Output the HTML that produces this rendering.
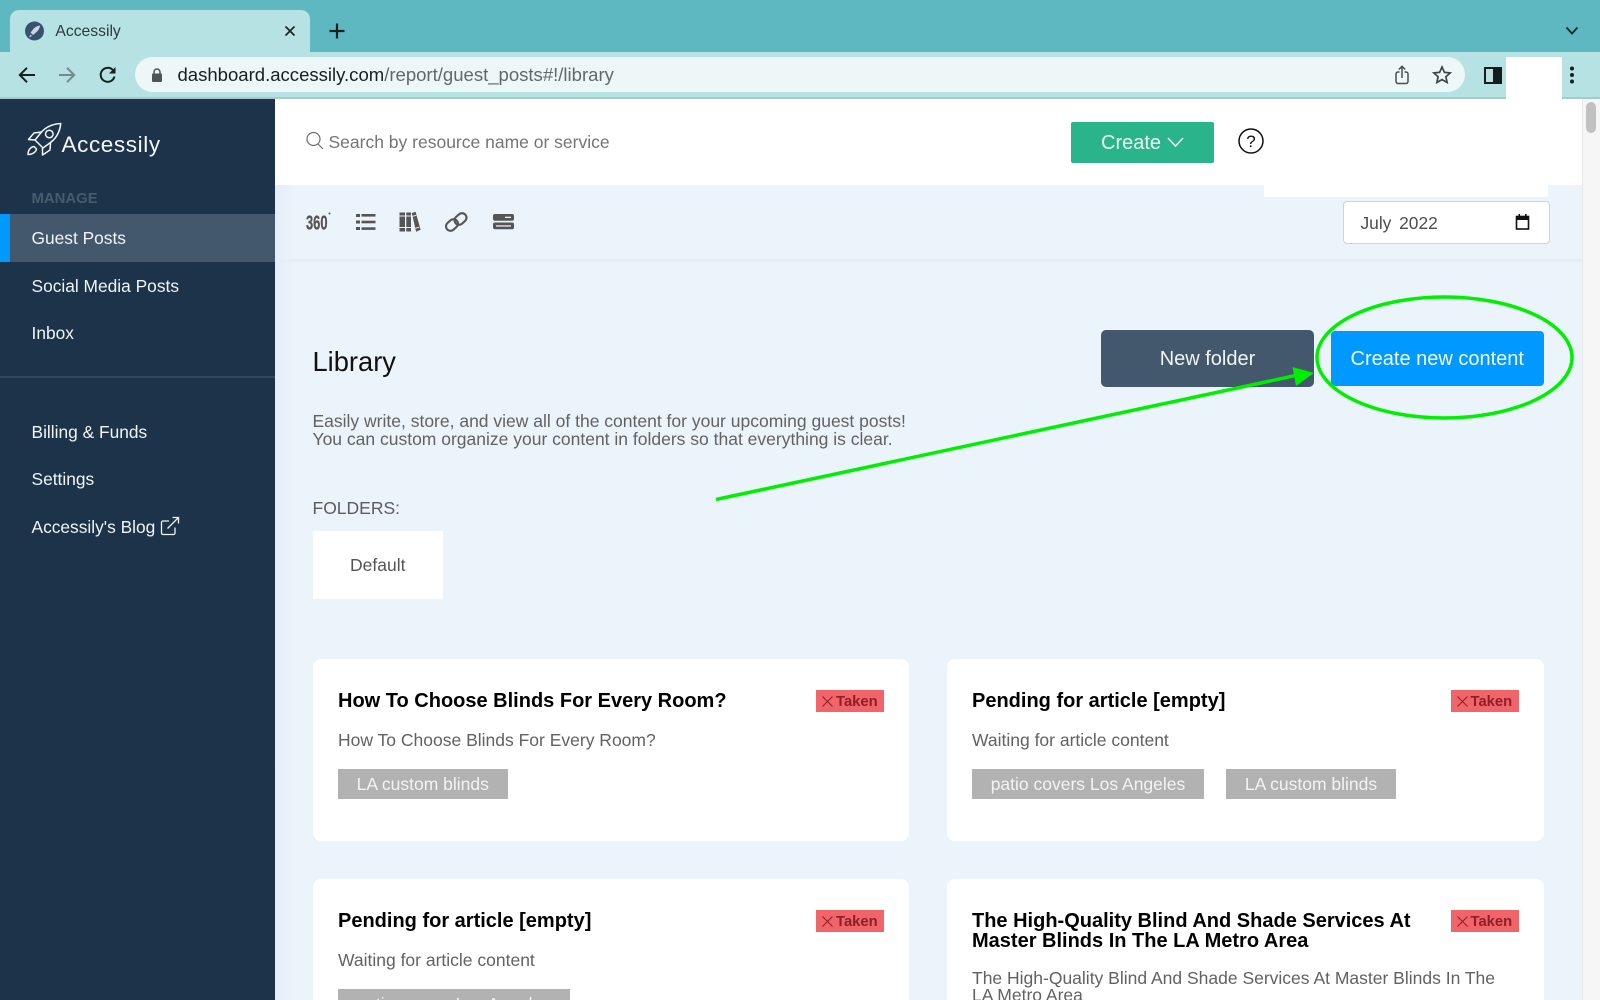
<!DOCTYPE html>
<html>
<head>
<meta charset="utf-8">
<title>Accessily</title>
<style>
html,body{margin:0;padding:0;width:1600px;height:1000px;overflow:hidden;background:#ebf3fb;font-family:"Liberation Sans",Arial,sans-serif}
#w{position:relative;width:1600px;height:1000px;overflow:hidden;background:#ebf3fb}
.a{position:absolute}
.t{position:absolute;white-space:nowrap;line-height:20px;height:20px}
.side{color:#f1f4f7;font-size:17.35px;left:31.5px}
.card{position:absolute;background:#fff;border-radius:8px}
.ttl{position:absolute;font-weight:bold;font-size:20px;line-height:20px;color:#000;white-space:nowrap}
.desc{position:absolute;font-size:17.5px;line-height:17.5px;color:#626262;white-space:nowrap}
.tag{position:absolute;background:#b2b2b2;color:#f3f3f3;font-size:17.5px;line-height:30px;height:30px;text-align:center;white-space:nowrap}
.bad{position:absolute;background:#f0646a;height:22px;width:68px;color:#8d2027;font-weight:bold;font-size:14.8px;line-height:24.5px}
.bad span{position:absolute;left:20px;top:0}
.bad svg{position:absolute;left:6px;top:5.5px}
</style>
</head>
<body>
<div id="w">
<!-- browser chrome -->
<div class="a" style="left:0;top:0;width:1600px;height:53px;background:#5db8c1"></div>
<div class="a" style="left:0;top:52px;width:1600px;height:46px;background:#b7e2e3"></div>
<div class="a" style="left:0;top:97px;width:1600px;height:2px;background:#a6cbce"></div>
<div class="a" style="left:10px;top:10px;width:300px;height:43px;background:#b7e2e3;border-radius:9px 9px 0 0"></div>
<svg class="a" style="left:24px;top:21px" width="22" height="22" viewBox="0 0 22 22"><circle cx="10.500" cy="10" r="9.500" fill="#35536f"/><path d="M16 4.500c-3.500 .5-5.500 2-7 4l-2.500 3 2.500 2.500 3-2.500c2-1.500 3.500-3.500 4-7zM6.500 13.500l-1.500 3 3-1.500z" fill="#c9d6df"/></svg>
<div class="t" style="left:55.400px;top:21.500px;font-size:15.700px;color:#2c3a3c">Accessily</div>
<svg class="a" style="left:284px;top:25px" width="12" height="12" viewBox="0 0 12 12"><path d="M1.500 1.500l9 9M10.500 1.500l-9 9" stroke="#1b2526" stroke-width="1.700" fill="none"/></svg>
<svg class="a" style="left:328px;top:22px" width="18" height="18" viewBox="0 0 18 18"><path d="M9 1.500v15M1.500 9h15" stroke="#152022" stroke-width="2.200" fill="none"/></svg>
<svg class="a" style="left:1564px;top:26px" width="16" height="10" viewBox="0 0 16 10"><path d="M2.500 1.500L8 7.500l5.500-6" stroke="#16282b" stroke-width="1.800" fill="none"/></svg>
<svg class="a" style="left:17px;top:65px" width="20" height="20" viewBox="0 0 20 20"><path d="M18 10H3M10 2.800L2.800 10l7.200 7.200" stroke="#15201f" stroke-width="2" fill="none"/></svg>
<svg class="a" style="left:57px;top:65px" width="20" height="20" viewBox="0 0 20 20"><path d="M2 10h15M10 2.800l7.200 7.200-7.200 7.200" stroke="#75898b" stroke-width="2" fill="none"/></svg>
<svg class="a" style="left:98px;top:65px" width="20" height="20" viewBox="0 0 20 20"><path d="M16.500 11.500A7 7 0 1 1 14.800 5" stroke="#15201f" stroke-width="2" fill="none"/><path d="M17.500 2v6.500H11z" fill="#15201f"/></svg>
<div class="a" style="left:135px;top:57px;width:1330px;height:35px;background:#eef7f8;border-radius:18px"></div>
<svg class="a" style="left:151px;top:67px" width="12" height="16" viewBox="0 0 12 16"><path d="M3 7V5a3 3 0 0 1 6 0v2" stroke="#4d5657" stroke-width="1.500" fill="none"/><rect x="1" y="6.500" width="10" height="8.500" rx="1" fill="#4d5657"/></svg>
<div class="t" style="left:177.500px;top:65px;font-size:18.550px;color:#5d6a6b"><span style="color:#16201f">dashboard.accessily.com</span>/report/guest_posts#!/library</div>
<svg class="a" style="left:1393px;top:64px" width="18" height="22" viewBox="0 0 18 22"><path d="M6.500 8H5a2 2 0 0 0-2 2v7.500a2 2 0 0 0 2 2h8a2 2 0 0 0 2-2V10a2 2 0 0 0-2-2h-1.500" stroke="#484f50" stroke-width="1.500" fill="none"/><path d="M9 14V2.500M5.800 5.500L9 2.300l3.200 3.200" stroke="#484f50" stroke-width="1.500" fill="none"/></svg>
<svg class="a" style="left:1432px;top:65px" width="20" height="20" viewBox="0 0 20 20"><path d="M10 2l2.400 5.300 5.800.6-4.300 3.900 1.200 5.700-5.100-2.900-5.100 2.900 1.200-5.700L1.800 7.900l5.800-.6z" stroke="#3c4647" stroke-width="1.700" fill="none"/></svg>
<div class="a" style="left:1484px;top:67px;width:14px;height:13px;border:2px solid #141c1d;background:#b7e2e3"></div>
<div class="a" style="left:1493px;top:67px;width:9px;height:17px;background:#141c1d"></div>
<div class="a" style="left:1505.500px;top:57px;width:56.500px;height:43px;background:#fff"></div>
<svg class="a" style="left:1568px;top:66px" width="8" height="18" viewBox="0 0 8 18"><circle cx="4" cy="2.500" r="2" fill="#172022"/><circle cx="4" cy="9" r="2" fill="#172022"/><circle cx="4" cy="15.500" r="2" fill="#172022"/></svg>

<!-- main bg -->
<div class="a" style="left:275px;top:99px;width:1307px;height:901px;background:#ebf3fb"></div>
<div class="a" style="left:275px;top:185px;width:20px;height:815px;background:linear-gradient(90deg,#e5eef9,#ebf3fb)"></div>
<div class="a" style="left:275px;top:99px;width:1307px;height:86px;background:#fff"></div>
<div class="a" style="left:1264px;top:185px;width:284px;height:12px;background:#fff"></div>
<div class="a" style="left:275px;top:259px;width:1307px;height:3px;background:#e7edf4"></div>
<!-- scrollbar -->
<div class="a" style="left:1582px;top:99px;width:18px;height:901px;background:#f6f6f6;border-left:1px solid #e8e8e8;box-sizing:border-box"></div>
<div class="a" style="left:1586px;top:102px;width:10px;height:31px;background:#c1c1c1;border-radius:5px"></div>

<!-- sidebar -->
<div class="a" style="left:0;top:99px;width:275px;height:901px;background:#1c3349"></div>
<div class="a" style="left:0;top:214px;width:275px;height:48px;background:#44586d"></div>
<div class="a" style="left:0;top:214px;width:10px;height:48px;background:#0099ff"></div>
<svg class="a" style="left:25px;top:122px" width="38" height="38" viewBox="0 0 38 38" fill="none" stroke="#f2f5f7" stroke-width="1.500" stroke-linejoin="round"><path d="M35.700 1.500C28 2 21 5 16.500 10L10 18l8 8 7.500-5.500C31.500 16 35 9.500 35.700 1.500z"/><circle cx="24.300" cy="12" r="3.800"/><path d="M16.500 10L9 11 3.500 17.500 10 18"/><path d="M25.500 20.500L25 28l-7.500 5V26"/><path d="M3 32.500C3 28 5.500 25 9 24.500L11.500 27C11 30 7.500 32.500 3 32.500z"/></svg>
<div class="t" style="left:61.500px;top:135px;font-size:22.500px;letter-spacing:.6px;color:#f5f7f9">Accessily</div>
<div class="t" style="left:31.500px;top:188.500px;font-size:14.900px;font-weight:bold;color:#485b6e">MANAGE</div>
<div class="t side" style="top:228px">Guest Posts</div>
<div class="t side" style="top:276px">Social Media Posts</div>
<div class="t side" style="top:323px">Inbox</div>
<div class="a" style="left:0;top:375.500px;width:275px;height:2px;background:#34495e"></div>
<div class="t side" style="top:422px">Billing &amp; Funds</div>
<div class="t side" style="top:469px">Settings</div>
<div class="t side" style="top:517px">Accessily's Blog</div>
<svg class="a" style="left:160px;top:516px" width="20" height="20" viewBox="0 0 20 20" fill="none" stroke="#f1f4f7" stroke-width="1.300"><path d="M15 11.500V17a1.500 1.500 0 0 1-1.500 1.500H3A1.500 1.500 0 0 1 1.500 17V6.500A1.500 1.500 0 0 1 3 5h6"/><path d="M7.500 12.500L18.500 1.500M12.500 1.500h6v6"/></svg>

<!-- header -->
<svg class="a" style="left:305px;top:131px" width="20" height="20" viewBox="0 0 20 20" fill="none" stroke="#707070" stroke-width="1.200"><circle cx="8.500" cy="8" r="6.500"/><path d="M13 13l5 5"/></svg>
<div class="t" style="left:328.500px;top:131.500px;font-size:17.500px;color:#757575">Search by resource name or service</div>
<div class="a" style="left:1071px;top:122px;width:143px;height:40.500px;background:#2ab48c;border-radius:2px"></div>
<div class="t" style="left:1101px;top:133px;font-size:20px;color:#ecf8f4">Create</div>
<svg class="a" style="left:1166px;top:135px" width="19" height="14" viewBox="0 0 19 14"><path d="M2 3l7.500 8L17 3" stroke="#ecf8f4" stroke-width="1.500" fill="none"/></svg>
<svg class="a" style="left:1237px;top:127px" width="28" height="28" viewBox="0 0 28 28"><circle cx="14" cy="14" r="12" stroke="#101010" stroke-width="1.500" fill="#fff"/><text x="14" y="20" text-anchor="middle" font-family="Liberation Sans" font-size="17" fill="#111">?</text></svg>

<!-- toolbar -->
<svg class="a" style="left:300px;top:205px" width="240" height="35" viewBox="300 205 240 35" fill="#555">
<text x="306" y="229.500" font-family="Liberation Sans" font-weight="bold" font-size="20" textLength="21.500" lengthAdjust="spacingAndGlyphs" stroke="#555" stroke-width=".3">360</text>
<circle cx="329.500" cy="213.500" r="1"/>
</svg>
<svg class="a" style="left:350px;top:208px" width="180" height="30" viewBox="350 208 180 30" fill="#555">
<rect x="356" y="214" width="4" height="3"/><rect x="356" y="220.500" width="4" height="3"/><rect x="356" y="227" width="4" height="3"/>
<rect x="361.500" y="214" width="14" height="2.600"/><rect x="361.500" y="220.700" width="14" height="2.600"/><rect x="361.500" y="227.300" width="14" height="2.600"/>
<path d="M399.500 212.500h5.500v19h-5.500zM406.300 212.500h4.700v19h-4.700zM411.800 213l3.800-1.300 5 18-4.500 2z"/>
<path d="M399.500 216h11.500M399.500 227.500h11.500M412.500 216.300l3.800-1M415.500 228.200l3.800-1" stroke="#ebf3fb" stroke-width="1"/>
<g fill="none" stroke="#555" stroke-width="2.100"><rect x="445.500" y="220.500" width="13" height="9" rx="4.500" transform="rotate(-42 452 225)"/><rect x="454" y="214.500" width="13" height="9" rx="4.500" transform="rotate(-42 460.500 219)"/></g>
<rect x="493" y="214" width="21" height="6.800" rx="2"/><rect x="493" y="222.500" width="21" height="6.800" rx="2"/>
<rect x="505" y="216.700" width="6" height="1.300" fill="#ebf3fb"/><rect x="496" y="225.300" width="15" height="1.300" fill="#ebf3fb"/>
</svg>
<div class="a" style="left:1343px;top:201px;width:207px;height:43px;background:#fff;border:1.500px solid #cfd2d5;border-radius:4px;box-sizing:border-box"></div>
<div class="t" style="left:1360.500px;top:213px;font-size:17.350px;color:#4c4c4c;word-spacing:3px">July 2022</div>
<svg class="a" style="left:1515px;top:213px" width="15" height="18" viewBox="0 0 15 18"><rect x="1.500" y="3.500" width="12" height="12.500" fill="#fff" stroke="#111" stroke-width="1.600"/><rect x="1" y="3" width="13" height="4" fill="#111"/><rect x="3.500" y="1" width="1.600" height="3" fill="#111"/><rect x="10" y="1" width="1.600" height="3" fill="#111"/></svg>

<!-- library head -->
<div class="t" style="left:312.500px;top:352px;font-size:27.300px;color:#111">Library</div>
<div class="desc" style="left:312.500px;top:413px">Easily write, store, and view all of the content for your upcoming guest posts!<br>You can custom organize your content in folders so that everything is clear.</div>
<div class="t" style="left:312.500px;top:497.500px;font-size:17.500px;color:#5c5c5c">FOLDERS:</div>
<div class="a" style="left:312.500px;top:531px;width:130.500px;height:67.500px;background:#fff;color:#555;font-size:17.500px;line-height:69.500px;text-align:center">Default</div>
<div class="a" style="left:1101px;top:330px;width:213px;height:57px;background:#44586d;border-radius:5px;color:#f1f4f7;font-size:20px;line-height:59px;text-align:center">New folder</div>
<div class="a" style="left:1331px;top:331px;width:212.500px;height:55px;background:#0099ff;border-radius:4px;color:#f0f8ff;font-size:20px;line-height:57px;text-align:center">Create new content</div>

<!-- cards -->
<div class="card" style="left:312.700px;top:659px;width:596.300px;height:182px"></div>
<div class="card" style="left:947px;top:659px;width:596.500px;height:182px"></div>
<div class="card" style="left:312.700px;top:879px;width:596.300px;height:130px;border-radius:8px 8px 0 0"></div>
<div class="card" style="left:947px;top:879px;width:596.500px;height:130px;border-radius:8px 8px 0 0"></div>

<div class="ttl" style="left:338px;top:691px">How To Choose Blinds For Every Room?</div>
<div class="desc" style="left:338px;top:732px">How To Choose Blinds For Every Room?</div>
<div class="tag" style="left:338px;top:769px;width:169.500px">LA custom blinds</div>
<div class="bad" style="left:816px;top:690px"><svg width="11" height="11" viewBox="0 0 11 11"><path d="M.5 .5l10 10M10.500 .5l-10 10" stroke="#8d2027" stroke-width="1" fill="none"/></svg><span>Taken</span></div>

<div class="ttl" style="left:972px;top:691px">Pending for article [empty]</div>
<div class="desc" style="left:972px;top:732px">Waiting for article content</div>
<div class="tag" style="left:972px;top:769px;width:232px">patio covers Los Angeles</div>
<div class="tag" style="left:1226px;top:769px;width:170px">LA custom blinds</div>
<div class="bad" style="left:1450.500px;top:690px"><svg width="11" height="11" viewBox="0 0 11 11"><path d="M.5 .5l10 10M10.500 .5l-10 10" stroke="#8d2027" stroke-width="1" fill="none"/></svg><span>Taken</span></div>

<div class="ttl" style="left:338px;top:911px">Pending for article [empty]</div>
<div class="desc" style="left:338px;top:952px">Waiting for article content</div>
<div class="tag" style="left:338px;top:989px;width:231.500px">patio covers Los Angeles</div>
<div class="bad" style="left:816px;top:910px"><svg width="11" height="11" viewBox="0 0 11 11"><path d="M.5 .5l10 10M10.500 .5l-10 10" stroke="#8d2027" stroke-width="1" fill="none"/></svg><span>Taken</span></div>

<div class="ttl" style="left:972px;top:911px">The High-Quality Blind And Shade Services At<br>Master Blinds In The LA Metro Area</div>
<div class="desc" style="left:972px;top:969.500px">The High-Quality Blind And Shade Services At Master Blinds In The<br>LA Metro Area</div>
<div class="bad" style="left:1450.500px;top:910px"><svg width="11" height="11" viewBox="0 0 11 11"><path d="M.5 .5l10 10M10.500 .5l-10 10" stroke="#8d2027" stroke-width="1" fill="none"/></svg><span>Taken</span></div>

<!-- annotation -->
<svg class="a" style="left:0;top:0" width="1600" height="1000" viewBox="0 0 1600 1000" fill="none">
<ellipse cx="1444.500" cy="357.500" rx="127.500" ry="60.500" stroke="#00ee00" stroke-width="3.500"/>
<path d="M716 499.500L1298 375" stroke="#00ee00" stroke-width="3.500"/>
<path d="M1292.500 367L1314 373 1296 386z" fill="#00ee00"/>
</svg>
</div>
</body>
</html>
